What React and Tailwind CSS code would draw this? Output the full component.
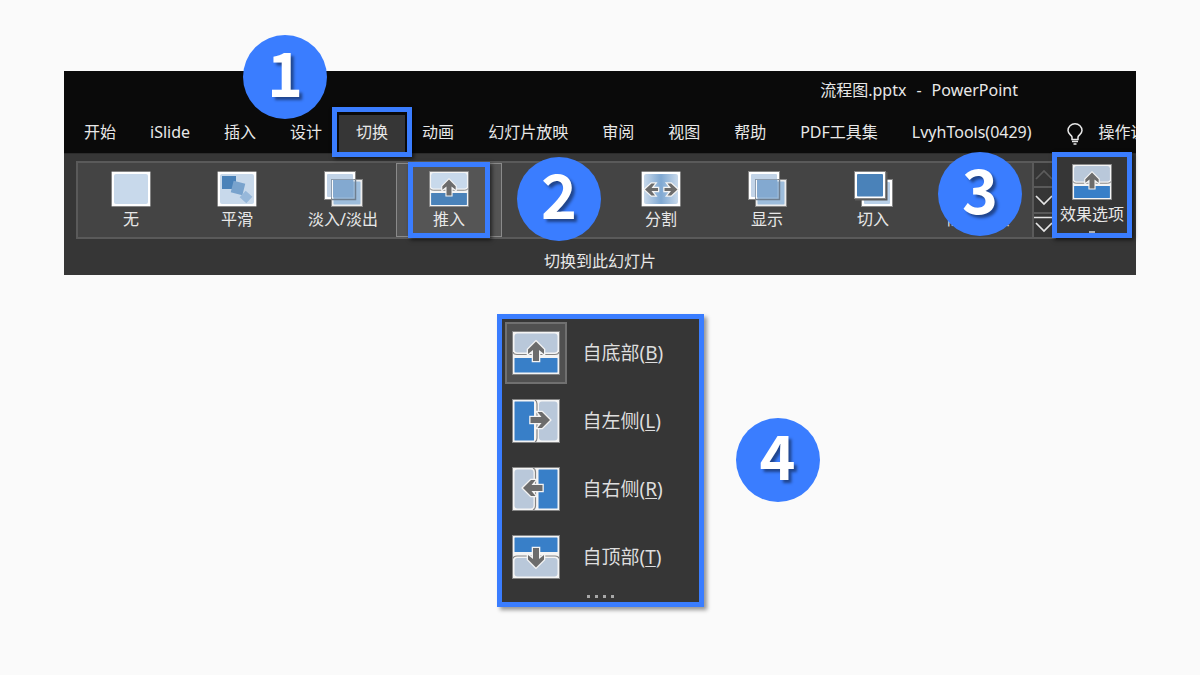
import React from "react";

const FRAME = "shadow-[2px_2px_4px_rgba(0,0,0,0.6)] border-[5px] border-[#3a7dff]";

function Badge({ children, className }) {
  return (
    <span
      className={`z-20 flex size-[84px] items-center justify-center rounded-full bg-[#3a7dff] pb-3.5 font-['Noto_Sans_CJK_SC',sans-serif] text-[61px] leading-none font-bold text-white [text-shadow:3px_3px_3px_rgba(0,0,0,0.45)] ${className}`}
    >
      {children}
    </span>
  );
}

function PushIcon({ from, className, vivid }) {
  const blue = vivid ? "#387fc8" : "#4a82b9";
  const pale = vivid ? "#b9c8da" : "#c8d9eb";
  const panels = {
    bottom: { a: [2.5, 2.5, 43, 19], b: [2.5, 27, 43, 14.5] },
    top: { a: [2.5, 23, 43, 18.5], b: [2.5, 2.5, 43, 14.5] },
    left: { a: [27, 2.5, 18.5, 39], b: [2.5, 2.5, 19.5, 39] },
    right: { a: [2.5, 2.5, 19, 39], b: [26.5, 2.5, 19, 39] },
  }[from];
  const turn = {
    bottom: "translate(24 20.5)",
    top: "translate(24 22.5) rotate(180)",
    left: "translate(28 21) rotate(90)",
    right: "translate(21 21) rotate(-90)",
  }[from];
  const seam = {
    bottom: "M1 21q0.5 2.500 4 2.500h38q3.500 0 4-2.500",
    top: "M1 23.500q0.5-2.500 4-2.500h38q3.500 0 4 2.500",
    left: "M23 1q2 1 2 4v34q0 3-2 4",
    right: "M21 1q2.500 1 2.500 4v34q0 3-2.500 4",
  }[from];
  const [ax, ay, aw, ah] = panels.a;
  const [bx, by, bw, bh] = panels.b;
  return (
    <svg viewBox="0 0 48 44" preserveAspectRatio="none" className={className} aria-hidden="true">
      <rect x="0.5" y="0.5" width="47" height="43" fill="#f4f4f4" stroke="#858585" />
      <rect x={ax} y={ay} width={aw} height={ah} rx="3" fill={pale} />
      <path d={seam} fill="none" stroke="#858585" strokeWidth="1.2" />
      <rect x={bx} y={by} width={bw} height={bh} rx="0.5" fill={blue} />
      <path
        transform={turn}
        d="M0-10l8 8v4.500l-5-4v11h-6v-11l-5 4v-4.500z"
        fill="#6c6c6c"
        stroke="#f4f4f4"
        strokeWidth="2.6"
        paintOrder="stroke"
      />
    </svg>
  );
}

function Sheet({ children }) {
  return (
    <svg viewBox="0 0 40 36" className="h-9 w-10" aria-hidden="true">
      {children}
    </svg>
  );
}

const card = (fill) => (
  <>
    <rect x="0.5" y="0.5" width="39" height="35" rx="1" fill="#fff" stroke="#858585" />
    <rect x="3" y="3" width="34" height="30" rx="2" fill={fill} />
  </>
);

const NoneIcon = () => <Sheet>{card("#c8d9eb")}</Sheet>;

const MorphIcon = () => (
  <Sheet>
    {card("#c8d9eb")}
    <rect x="5" y="5" width="14" height="13" fill="#4a82b9" />
    <rect x="15" y="11" width="12" height="12" fill="#79a3cd" transform="rotate(14 21 17)" />
    <rect x="24.500" y="21.500" width="9" height="9" fill="#97b8da" transform="rotate(42 29 26)" />
  </Sheet>
);

const FadeIcon = () => (
  <Sheet>
    <rect x="1.5" y="0.5" width="31" height="28" fill="#fff" stroke="#858585" />
    <rect x="4" y="3" width="26" height="23" rx="1" fill="#c2d4e8" />
    <rect x="8.500" y="8.500" width="31" height="27" fill="#fff" fillOpacity="0.9" stroke="#858585" />
    <rect x="10.500" y="10.500" width="27" height="23" rx="1" fill="#9dbddc" />
    <path d="M9 9h21.500v17.500H10V9z" fill="#83a9d0" />
    <path d="M8.500 27V8.500H31" fill="none" stroke="#8d9daf" />
    <path d="M32.500 9v19.500H9" fill="none" stroke="#6f7f90" strokeWidth="1.500" />
  </Sheet>
);

const CutIcon = () => (
  <Sheet>
    <rect x="8.500" y="8.500" width="31" height="27" fill="#fff" stroke="#858585" />
    <rect x="11" y="11" width="26" height="22" rx="1" fill="#b9d0e8" />
    <rect x="2" y="1" width="32.500" height="28.500" fill="#5a5a5a" />
    <rect x="1.500" y="0.500" width="31" height="27" fill="#fff" stroke="#858585" />
    <rect x="4" y="3" width="26" height="22.500" rx="1" fill="#4a82b9" />
  </Sheet>
);

const SplitIcon = () => (
  <Sheet>
    <defs>
      <linearGradient id="split">
        <stop offset="0" stopColor="#c8d9eb" />
        <stop offset="0.5" stopColor="#7fa8d2" />
        <stop offset="1" stopColor="#c8d9eb" />
      </linearGradient>
    </defs>
    {card("url(#split)")}
    <g fill="#6c6c6c" stroke="#f4f4f4" strokeWidth="2.500" paintOrder="stroke">
      <path d="M4 18.500l6.500-6h3.500l-3.500 4.500h6.500v3h-6.500l3.500 4.500h-3.500z" />
      <path d="M36.500 18.500l-6.500-6h-3.500l3.500 4.500h-6.500v3h6.500l-3.500 4.500h3.500z" />
    </g>
  </Sheet>
);

const WipeIcon = () => (
  <Sheet>
    {card("#c8d9eb")}
    <rect x="20" y="3" width="17" height="30" fill="#4a82b9" />
  </Sheet>
);

const BarsIcon = () => (
  <Sheet>
    {card("#c8d9eb")}
    <path d="M8 3v30M14 3v30M24 3v30M31 3v30" stroke="#4a82b9" strokeWidth="3" />
  </Sheet>
);

const tabs = [
  "开始", "iSlide", "插入", "设计", "切换", "动画", "幻灯片放映",
  "审阅", "视图", "帮助", "PDF工具集", "LvyhTools(0429)",
];

const transitions = [
  ["无", NoneIcon],
  ["平滑", MorphIcon],
  ["淡入/淡出", FadeIcon],
  ["推入", null],
  ["", WipeIcon],
  ["分割", SplitIcon],
  ["显示", FadeIcon],
  ["切入", CutIcon],
  ["随机线条", BarsIcon],
];

const directions = [
  ["自底部", "B", "bottom"],
  ["自左侧", "L", "left"],
  ["自右侧", "R", "right"],
  ["自顶部", "T", "top"],
];

function Tab({ label }) {
  const active = label === "切换";
  return (
    <div className="relative">
      <button
        role="tab"
        aria-selected={active}
        className={`h-[38px] px-[17px] pb-1 whitespace-nowrap ${active ? "bg-[#363636]" : ""}`}
      >
        {label}
      </button>
      {active && (
        <>
          <span className={`pointer-events-none absolute -inset-x-[7px] -top-2 -bottom-1 z-10 ${FRAME}`} />
          <Badge className="absolute -top-[80px] -left-24">1</Badge>
        </>
      )}
    </div>
  );
}

function Transition({ label, Icon }) {
  const selected = label === "推入";
  return (
    <div className="relative">
      <button
        aria-label={label || "擦除"}
        className={`flex h-full w-full flex-col items-center border pt-[7px] whitespace-nowrap ${
          selected ? "border-[#8a8a8a] bg-[#555555]" : "border-transparent"
        }`}
      >
        {selected ? <PushIcon from="bottom" className="h-9 w-10" /> : <Icon />}
        <span className="leading-6">{label}</span>
      </button>
      {selected && (
        <>
          <span className={`pointer-events-none absolute inset-x-3 -inset-y-px z-10 ${FRAME}`} />
          <Badge className="absolute -top-1.5 left-[121px]">2</Badge>
        </>
      )}
    </div>
  );
}

function Scroller({ path, label, dim }) {
  return (
    <button aria-label={label} className="flex flex-1 items-center justify-center border-b-2 border-[#5a5a5a] bg-[#363636] last:border-b-0">
      <svg viewBox="0 0 20 20" className={`size-5 ${dim ? "text-[#5c5c5c]" : "text-[#e6e6e6]"}`} fill="none" stroke="currentColor" strokeWidth="1.7" aria-hidden="true">
        <path d={path} />
      </svg>
    </button>
  );
}

export default function App() {
  return (
    <main className="min-h-screen bg-[#fafafa] px-16 pt-[71px] pb-16 font-['Noto_Sans','Noto_Sans_CJK_SC',sans-serif]">
      <section className="relative bg-[#0a0a0a] text-base text-[#e8e8e8]">
        <header className="flex h-[38px] items-center justify-end gap-2.5 pr-[118px]">
          <span>流程图.pptx</span>
          <span>-</span>
          <span>PowerPoint</span>
        </header>

        <nav className="flex h-11 items-end pl-[3px]">
          <div role="tablist" className="flex">
            {tabs.map((t) => (
              <Tab key={t} label={t} />
            ))}
          </div>
          <div className="min-w-0 flex-1 overflow-hidden pl-[18px]">
            <button className="flex h-[38px] items-center gap-4 pb-1 whitespace-nowrap">
              <svg viewBox="0 0 16 22" className="mt-1 h-[22px] w-4 shrink-0" fill="none" stroke="currentColor" strokeWidth="1.5" aria-hidden="true">
                <path d="M5 16.500v-2.500C4.500 12 1 11 1 7.500a7 6.700 0 0 1 14 0C15 11 11.500 12 11 14v2.500zM5 18.500h6M6.500 21h3" />
              </svg>
              操作说
            </button>
          </div>
        </nav>

        <div className="border-t border-[#2b2b2b] bg-[#363636] pt-[7px]">
          <div className="flex pr-1 pl-3">
            <div className="-mr-1 flex h-[78px] flex-1 border-2 border-[#5a5a5a] bg-[#444444]">
              <div className="grid flex-1 grid-cols-9">
                {transitions.map(([label, Icon]) => (
                  <Transition key={label} label={label} Icon={Icon} />
                ))}
              </div>
              <div className="flex w-[22px] flex-col border-l-2 border-[#5a5a5a]">
                <Scroller label="上一行" path="M2 14l8-8 8 8" dim />
                <Scroller label="下一行" path="M2 6l8 8 8-8" />
                <Scroller label="其他" path="M0 2.500h20M2 8l8 8 8-8" />
              </div>
            </div>
            <div className="relative">
              <button className={`relative z-10 -mt-[9px] flex h-[86px] w-20 flex-col items-center overflow-hidden bg-[#363636] pt-[7px] whitespace-nowrap ${FRAME}`}>
                <PushIcon from="bottom" vivid className="h-9 w-10 shrink-0" />
                <span className="shrink-0 leading-7">效果选项</span>
                <span className="mt-[3px] h-[3px] w-1.5 shrink-0 bg-[#b0b0b0]" />
              </button>
              <Badge className="absolute -top-[9px] -left-[114px]">3</Badge>
            </div>
          </div>
          <p className="pt-2.5 pb-0.5 text-center leading-6">切换到此幻灯片</p>
        </div>
      </section>

      <div className="relative mx-auto mt-[39px] w-[207px]">
        <div role="menu" className="border-[5px] border-[#3a7dff] bg-[#363636] text-[19px] text-[#dedede] shadow-[3px_3px_4px_rgba(0,0,0,0.4)]">
          {directions.map(([label, key, from]) => (
            <button key={key} role="menuitem" className="flex h-[68px] w-full items-center gap-4 pl-[3px]">
              <span
                className={`flex size-[62px] items-center justify-center border-2 ${
                  from === "bottom" ? "border-[#707070] bg-[#505050]" : "border-transparent"
                }`}
              >
                <PushIcon from={from} vivid className="h-11 w-12" />
              </span>
              <span className="whitespace-nowrap">
                {label}(<u className="underline-offset-2">{key}</u>)
              </span>
            </button>
          ))}
          <div className="flex h-[11px] items-center justify-center gap-[5px]">
            {[0, 1, 2, 3].map((i) => (
              <span key={i} className="size-[3px] bg-[#a8a8a8]" />
            ))}
          </div>
        </div>
        <Badge className="absolute top-[104px] left-[239px]">4</Badge>
      </div>
    </main>
  );
}
